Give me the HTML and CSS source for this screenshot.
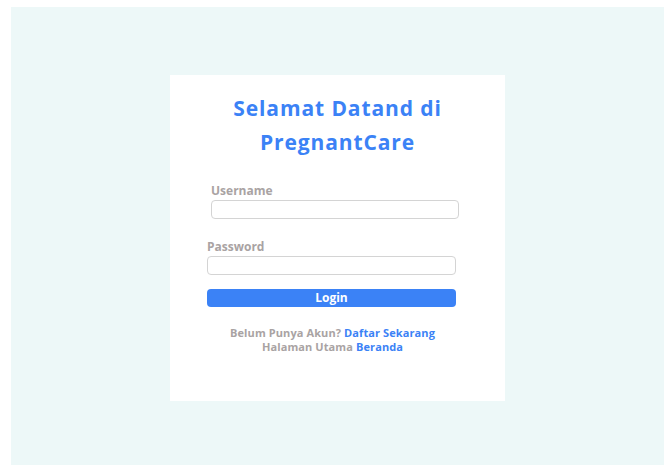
FILE: index.html
```html
<!DOCTYPE html>
<html lang="id">
<head>
<meta charset="utf-8">
<title>Login - PregnantCare</title>
<link rel="stylesheet" href="styles.css">
</head>
<body>
<div class="page">
  <main class="panel">
    <section class="card">
      <h1 class="title">Selamat Datand di<br>PregnantCare</h1>
      <form class="form">
        <div class="field field-user">
          <label class="label" for="username">Username</label>
          <input class="input" id="username" type="text">
        </div>
        <div class="field field-pass">
          <label class="label" for="password">Password</label>
          <input class="input" id="password" type="password">
        </div>
        <button class="btn" type="button">Login</button>
      </form>
      <div class="links">
        <p>Belum Punya Akun? <a href="#">Daftar Sekarang</a></p>
        <p>Halaman Utama <a href="#">Beranda</a></p>
      </div>
    </section>
  </main>
</div>
</body>
</html>
```
FILE: styles.css
```css
* { box-sizing: border-box; }

html, body {
  margin: 0;
  background: #ffffff;
}

body {
  font-family: "Open Sans", "Liberation Sans", sans-serif;
  font-weight: 700;
}

.page {
  width: 670px;
  height: 466px;
  padding: 7px 6px 1px 11px;
}

.panel {
  height: 458px;
  background: #edf8f8;
  display: flex;
  justify-content: center;
  padding-top: 68px;
}

.card {
  width: 335px;
  height: 326px;
  background: #ffffff;
  padding-top: 17px;
}

.title {
  margin: 0;
  text-align: center;
  font-size: 21px;
  line-height: 33.5px;
  font-weight: 700;
  letter-spacing: 0.9px;
  color: #3b82f6;
}

.form {
  margin-top: 24px;
  padding: 0 49px 0 37px;
}

.field {
  display: flex;
  flex-direction: column;
  gap: 1px;
}

.field-user {
  margin-left: 4px;
  margin-right: -3px;
}

.field-pass {
  margin-top: 20px;
}

.label {
  font-size: 12px;
  line-height: 16px;
  color: #a9a3a3;
}

.input {
  height: 19px;
  border: 1px solid #d4d4d4;
  border-radius: 4px;
  background: #fff;
  margin: 0;
  padding: 0 6px;
  font: inherit;
}

.btn {
  display: block;
  width: 100%;
  margin-top: 14px;
  height: 18px;
  border: none;
  border-radius: 4px;
  background: #3b82f6;
  color: #ffffff;
  font: inherit;
  font-size: 12px;
  line-height: 18px;
  padding: 0;
}

.links {
  margin-top: 19px;
  padding-right: 10px;
  text-align: center;
  font-size: 11px;
  line-height: 14px;
  letter-spacing: 0.1px;
  color: #a9a3a3;
}

.links p {
  margin: 0;
}

.links a {
  color: #3b82f6;
  text-decoration: none;
}
```
